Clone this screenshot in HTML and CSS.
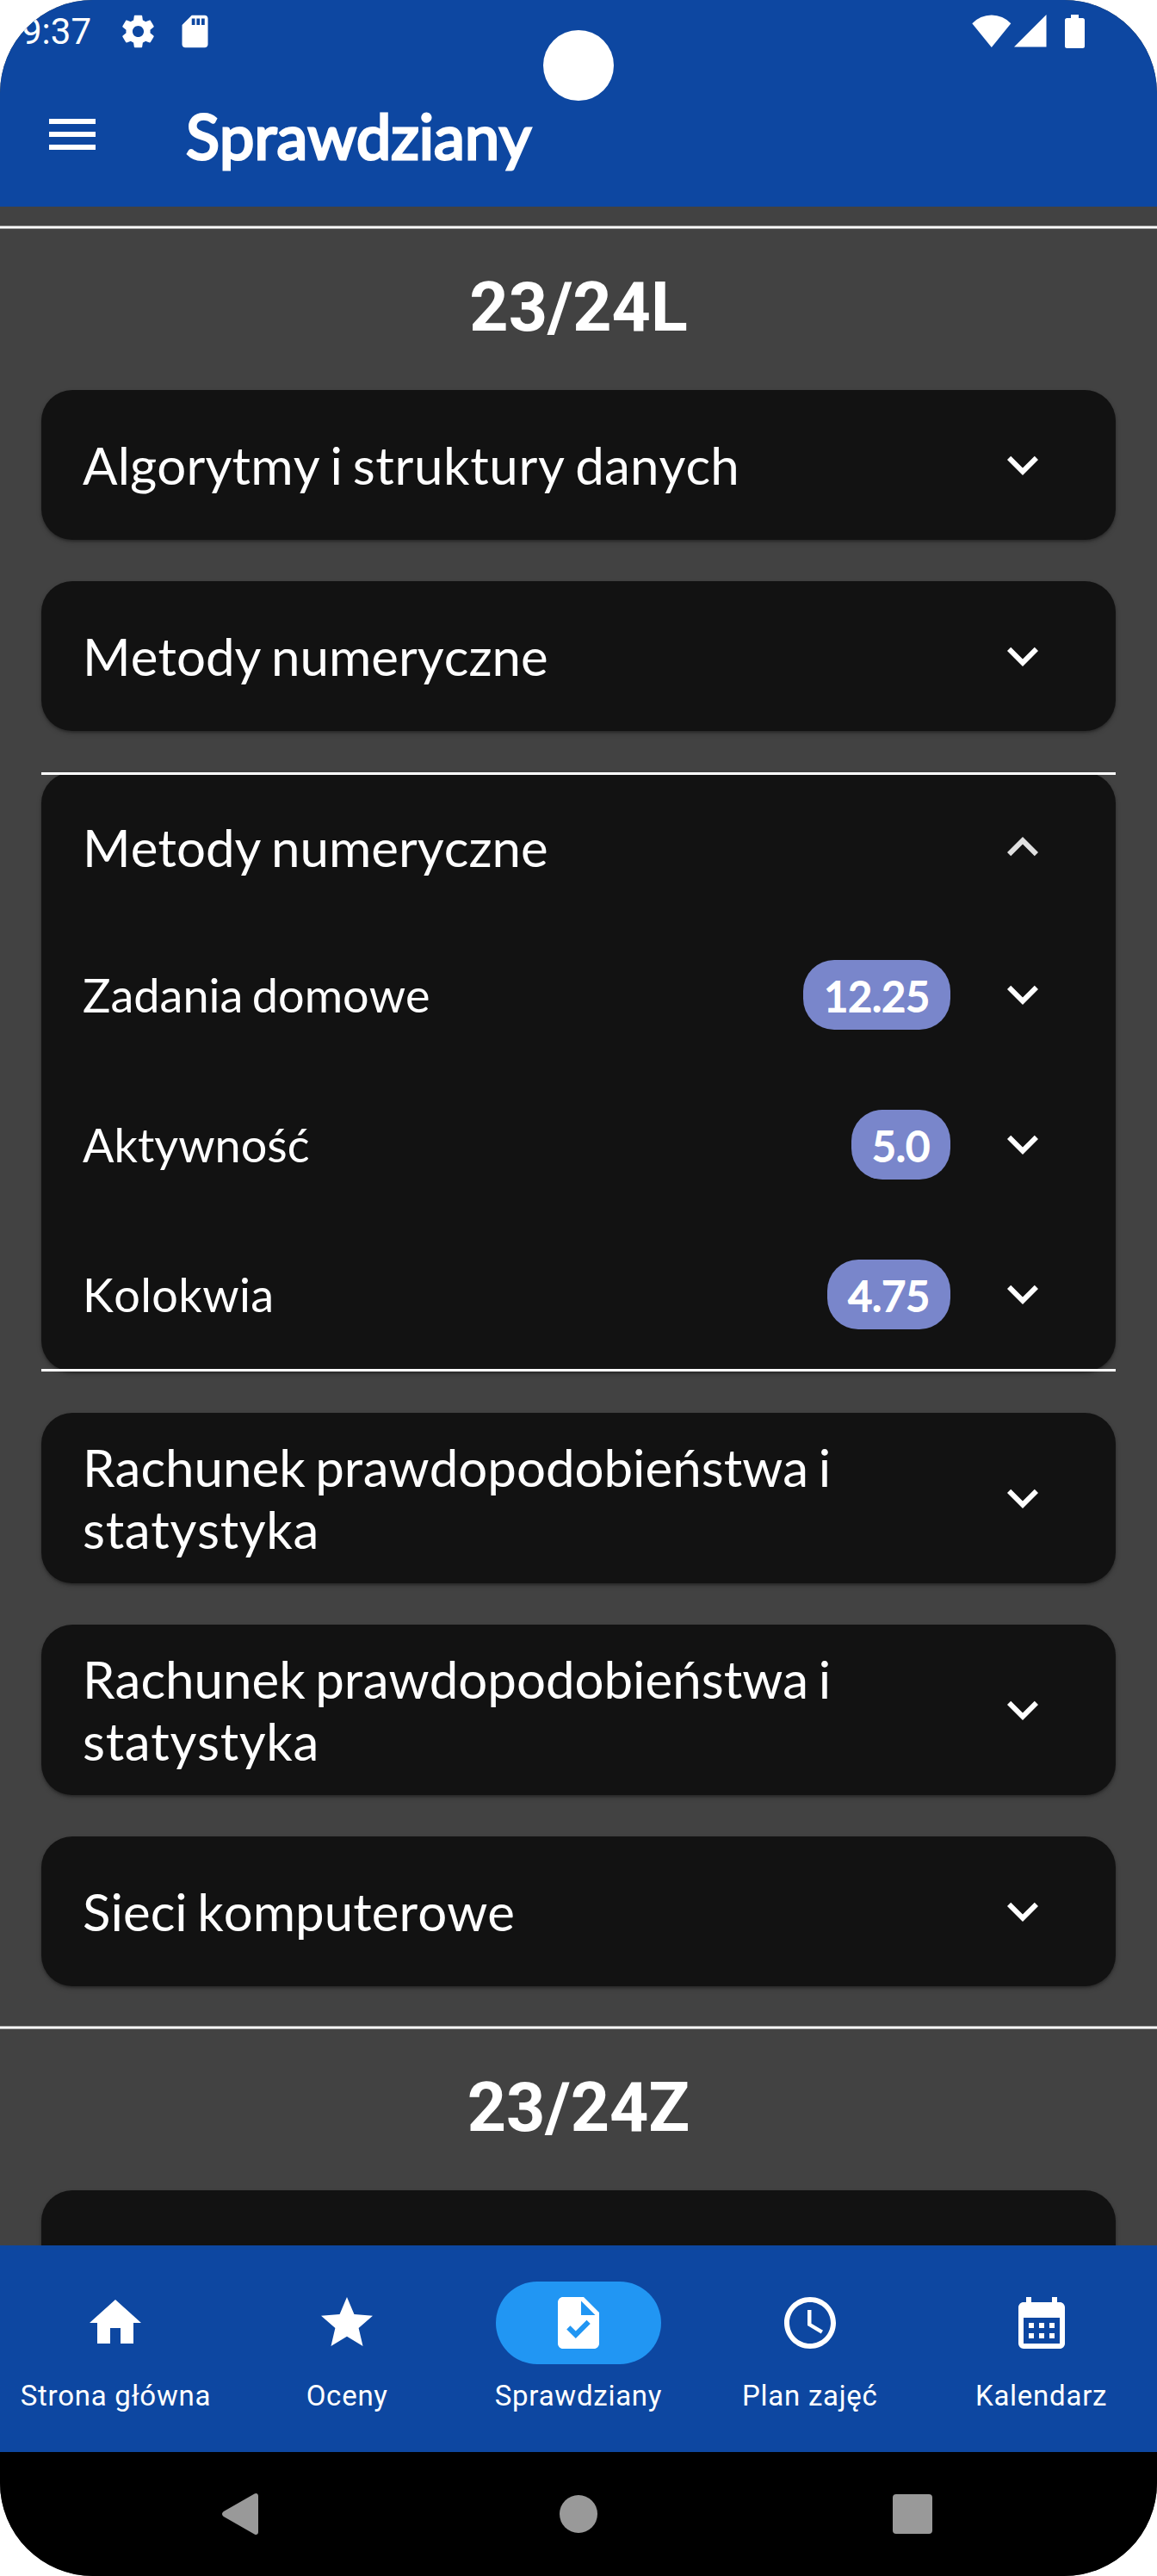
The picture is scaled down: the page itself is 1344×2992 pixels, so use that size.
FILE: index.html
```html
<!DOCTYPE html>
<html lang="pl">
<head>
<meta charset="utf-8">
<title>Sprawdziany</title>
<link rel="stylesheet" href="styles.css">
</head>
<body>
<svg class="defs" width="0" height="0" aria-hidden="true">
  <symbol id="more" viewBox="0 0 24 24"><path d="M16.59 8.59 12 13.17 7.41 8.59 6 10l6 6 6-6z"/></symbol>
  <symbol id="less" viewBox="0 0 24 24"><path d="M12 8l-6 6 1.41 1.41L12 10.83l4.59 4.58L18 14z"/></symbol>
</svg>
<div class="screen">
  <header class="top">
    <div class="status">
      <span class="time">9:37</span>
      <svg class="status-icon gear" viewBox="0 0 24 24"><path d="M19.43 12.98c.04-.32.07-.64.07-.98s-.03-.66-.07-.98l2.11-1.65c.19-.15.24-.42.12-.64l-2-3.46c-.12-.22-.39-.3-.61-.22l-2.49 1c-.52-.4-1.080-.73-1.690-.98l-.38-2.650C14.460 2.180 14.250 2 14 2h-4c-.25 0-.46.18-.49.42l-.38 2.650c-.61.25-1.170.59-1.690.98l-2.490-1c-.23-.09-.49 0-.61.22l-2 3.460c-.13.22-.07.49.12.64l2.110 1.650c-.04.32-.07.65-.07.98s.03.66.07.98l-2.110 1.650c-.19.15-.24.42-.12.64l2 3.460c.12.22.39.3.61.22l2.490-1c.52.4 1.080.73 1.690.98l.38 2.650c.03.24.24.42.49.42h4c.25 0 .46-.18.49-.42l.38-2.650c.61-.25 1.170-.59 1.690-.98l2.490 1c.23.09.49 0 .61-.22l2-3.460c.12-.22.07-.49-.12-.64l-2.110-1.650zM12 15.500c-1.930 0-3.500-1.570-3.500-3.500s1.570-3.500 3.500-3.500 3.500 1.570 3.500 3.500-1.570 3.500-3.500 3.500z"/></svg>
      <svg class="status-icon sd" viewBox="0 0 24 24"><path d="M18 2h-8L4.02 8 4 20c0 1.1.9 2 2 2h12c1.1 0 2-.9 2-2V4c0-1.1-.9-2-2-2zm-6 6h-2V4h2v4zm3 0h-2V4h2v4zm3 0h-2V4h2v4z"/></svg>
      <svg class="wifi" viewBox="0 0 46 39"><path d="M.3 10.3a30.6 30.6 0 0 1 45 0L22.8 38z"/></svg>
      <svg class="cell" viewBox="0 0 38 38"><path d="M37.5 0v37.5H0z"/></svg>
      <svg class="battery" viewBox="0 0 23 39"><path d="M7 0h9v4h4.500a2.500 2.500 0 0 1 2.500 2.500v30a2.500 2.500 0 0 1-2.500 2.500h-18A2.500 2.500 0 0 1 0 36.500v-30A2.500 2.500 0 0 1 2.500 4H7z"/></svg>
    </div>
    <div class="appbar">
      <svg class="menu" viewBox="0 0 24 24"><path d="M3 18h18v-2H3v2zm0-5h18v-2H3v2zm0-7v2h18V6H3z"/></svg>
      <h1>Sprawdziany</h1>
    </div>
    <div class="camera"></div>
  </header>

  <main class="list">
    <section class="term">
      <h2>23/24L</h2>
      <div class="cards">
        <article class="card"><span class="name algo">Algorytmy i <span class="loose">struktury</span> danych</span><svg class="chev"><use href="#more"/></svg></article>
        <article class="card"><span class="name">Metody numeryczne</span><svg class="chev"><use href="#more"/></svg></article>
        <article class="card open">
          <div class="row head"><span class="name">Metody numeryczne</span><svg class="chev up"><use href="#less"/></svg></div>
          <div class="row"><span class="sub">Zadania domowe</span><span class="chip">12.25</span><svg class="chev"><use href="#more"/></svg></div>
          <div class="row"><span class="sub">Aktywność</span><span class="chip">5.0</span><svg class="chev"><use href="#more"/></svg></div>
          <div class="row"><span class="sub kolokwia">Kolokwia</span><span class="chip">4.75</span><svg class="chev"><use href="#more"/></svg></div>
        </article>
        <article class="card tall"><span class="name">Rachunek prawdopodobieństwa i <span class="loose">statystyka</span></span><svg class="chev"><use href="#more"/></svg></article>
        <article class="card tall"><span class="name">Rachunek prawdopodobieństwa i <span class="loose">statystyka</span></span><svg class="chev"><use href="#more"/></svg></article>
        <article class="card"><span class="name">Sieci komputerowe</span><svg class="chev"><use href="#more"/></svg></article>
      </div>
    </section>
    <section class="term">
      <h2>23/24Z</h2>
      <div class="cards"><article class="card"></article></div>
    </section>
  </main>

  <nav class="tabs">
    <a class="tab"><span class="pill"><svg viewBox="0 0 24 24"><path d="M10 20v-6h4v6h5v-8h3L12 3 2 12h3v8z"/></svg></span><span class="label">Strona główna</span></a>
    <a class="tab"><span class="pill"><svg viewBox="0 0 24 24"><path d="M12 17.27 18.18 21l-1.64-7.030L22 9.240l-7.190-.610L12 2 9.190 8.630 2 9.240l5.460 4.730L5.820 21z"/></svg></span><span class="label">Oceny</span></a>
    <a class="tab active"><span class="pill"><svg viewBox="0 0 24 24"><path d="M14 2H6c-1.1 0-1.99.9-1.99 2L4 20c0 1.1.89 2 1.99 2H18c1.1 0 2-.9 2-2V8l-6-6zm-3.060 16L7.400 14.460l1.410-1.410 2.120 2.120 4.240-4.240 1.410 1.410L10.940 18zM13 9V3.500L18.500 9H13z"/></svg></span><span class="label">Sprawdziany</span></a>
    <a class="tab"><span class="pill"><svg viewBox="0 0 24 24"><path d="M11.990 2C6.470 2 2 6.480 2 12s4.470 10 9.990 10C17.520 22 22 17.520 22 12S17.520 2 11.990 2zM12 20c-4.420 0-8-3.580-8-8s3.580-8 8-8 8 3.580 8 8-3.580 8-8 8zM12.500 7H11v6l5.250 3.150.75-1.230-4.500-2.670z"/></svg></span><span class="label">Plan zajęć</span></a>
    <a class="tab"><span class="pill"><svg viewBox="0 0 24 24"><path d="M19 4h-1V2h-2v2H8V2H6v2H5c-1.110 0-1.990.9-1.990 2L3 20a2 2 0 0 0 2 2h14c1.100 0 2-.9 2-2V6c0-1.100-.9-2-2-2zm0 16H5V10h14v10zM9 14H7v-2h2v2zm4 0h-2v-2h2v2zm4 0h-2v-2h2v2zm-8 4H7v-2h2v2zm4 0h-2v-2h2v2zm4 0h-2v-2h2v2z"/></svg></span><span class="label">Kalendarz</span></a>
  </nav>

  <footer class="sysnav">
    <svg class="back" viewBox="0 0 42 48"><path d="M42 3v42c0 2.500-2.400 3.800-4.400 2.400L1.800 27c-2.400-1.800-2.400-4.200 0-6L37.600.6C39.600-.8 42 .5 42 3z"/></svg>
    <span class="home"></span>
    <span class="recent"></span>
  </footer>
</div>
</body>
</html>
```

FILE: styles.css
```css
* { box-sizing: border-box; }

body {
  margin: 0;
  background: #fff;
  color: #fff;
}

svg { display: block; flex: none; fill: currentColor; }
.defs { position: absolute; }

h1, h2 { margin: 0; font-weight: 700; }

.screen {
  width: 1344px;
  height: 2992px;
  display: flex;
  flex-direction: column;
  overflow: hidden;
  border-radius: 108px;
  background: #424242;
}

/* Status bar and app bar */
.top {
  position: relative;
  height: 240px;
  flex: none;
  background: #0d47a1;
}

.status {
  height: 72px;
  display: flex;
  align-items: center;
  padding: 0 84px 0 25px;
}

.time {
  width: 112.5px;
  font: 400 42px/50px Roboto, sans-serif;
  padding-top: 2px;
}

.status-icon { width: 45px; height: 45px; }
.sd { margin-left: 21px; }
.wifi { width: 46px; height: 39px; margin-left: auto; }
.cell { width: 38px; height: 38px; margin-left: 3px; }
.battery { width: 23px; height: 39px; margin-left: 21px; }

.appbar {
  height: 168px;
  display: flex;
  align-items: center;
  padding: 0 48px;
}

.menu { width: 72px; height: 72px; }

h1 {
  margin-left: 96px;
  padding-top: 2px;
  font: 400 72px/90px Lato, sans-serif;
  font-kerning: none;
  -webkit-text-stroke: 3px currentColor;
}

.camera {
  position: absolute;
  left: 631px;
  top: 35px;
  width: 82px;
  height: 82px;
  border-radius: 50%;
  background: #fff;
}

/* Scrollable list */
.list {
  height: 2368px;
  flex: none;
  padding-top: 22px;
  overflow: hidden;
}

.term::before {
  content: "";
  display: block;
  height: 4px;
  background: linear-gradient(#a1a1a1 1px, #fff 1px 3px, #a1a1a1 3px);
}

h2 {
  padding: 45px 0 50px;
  font: 700 79px/92px Roboto, sans-serif;
  text-align: center;
}

.cards {
  display: flex;
  flex-direction: column;
  gap: 48px;
  padding: 0 48px 46px;
}

.card {
  display: flex;
  align-items: center;
  justify-content: space-between;
  height: 174px;
  padding: 0 72px 0 48px;
  border-radius: 36px;
  background: #121212;
  box-shadow: 0 2px 3px rgba(0, 0, 0, .3), 0 3px 6px rgba(0, 0, 0, .14);
}

.card.tall { height: 198px; }

.card.open {
  position: relative;
  height: auto;
  display: block;
  padding-top: 3px;
  padding-bottom: 3px;
}

.card.open::before,
.card.open::after {
  content: "";
  position: absolute;
  left: 0;
  right: 0;
  height: 3px;
  background: #fff;
}

.card.open::before { top: 0; }
.card.open::after { bottom: 0; }

.row {
  display: flex;
  align-items: center;
  height: 174px;
}

.row.head { height: 168px; }

.name,
.sub {
  font: 400 60px/72px Lato, sans-serif;
  font-kerning: none;
  word-spacing: -.063em;
}

.name { width: 940px; }
.sub { font-size: 54px; line-height: 65px; }

.algo { letter-spacing: .13px; }
.loose { letter-spacing: .65px; }
.kolokwia { letter-spacing: .4px; }

.chev { width: 72px; height: 72px; margin-left: auto; }
.chev.up { color: #e0e0e0; }

.chip {
  height: 81px;
  margin-left: auto;
  padding: 1px 24px 0;
  border-radius: 36px;
  background: #7986cb;
  font: 400 48px/81px Lato, sans-serif;
  font-kerning: none;
  -webkit-text-stroke: 2px currentColor;
}

.chip + .chev { margin-left: 48px; }

/* Bottom tabs */
.tabs {
  height: 240px;
  flex: none;
  display: grid;
  grid-template-columns: repeat(5, 1fr);
  padding-top: 42px;
  background: #0d47a1;
}

.tab {
  display: flex;
  flex-direction: column;
  align-items: center;
}

.pill {
  width: 192px;
  height: 96px;
  display: flex;
  align-items: center;
  justify-content: center;
  border-radius: 48px;
}

.pill svg { width: 72px; height: 72px; }
.active .pill { background: #2196f3; }

.label {
  margin-top: 17px;
  font: 400 33px/40px Roboto, sans-serif;
  letter-spacing: .75px;
  white-space: nowrap;
}

/* System navigation */
.sysnav {
  height: 144px;
  flex: none;
  display: flex;
  align-items: center;
  padding-left: 258px;
  background: #000;
  color: #999;
}

.back { width: 42px; height: 48px; }

.home {
  width: 44px;
  height: 44px;
  margin-left: 350px;
  border-radius: 50%;
  background: #999;
}

.recent {
  width: 46px;
  height: 46px;
  margin-left: 343px;
  border-radius: 4px;
  background: #999;
}
```
